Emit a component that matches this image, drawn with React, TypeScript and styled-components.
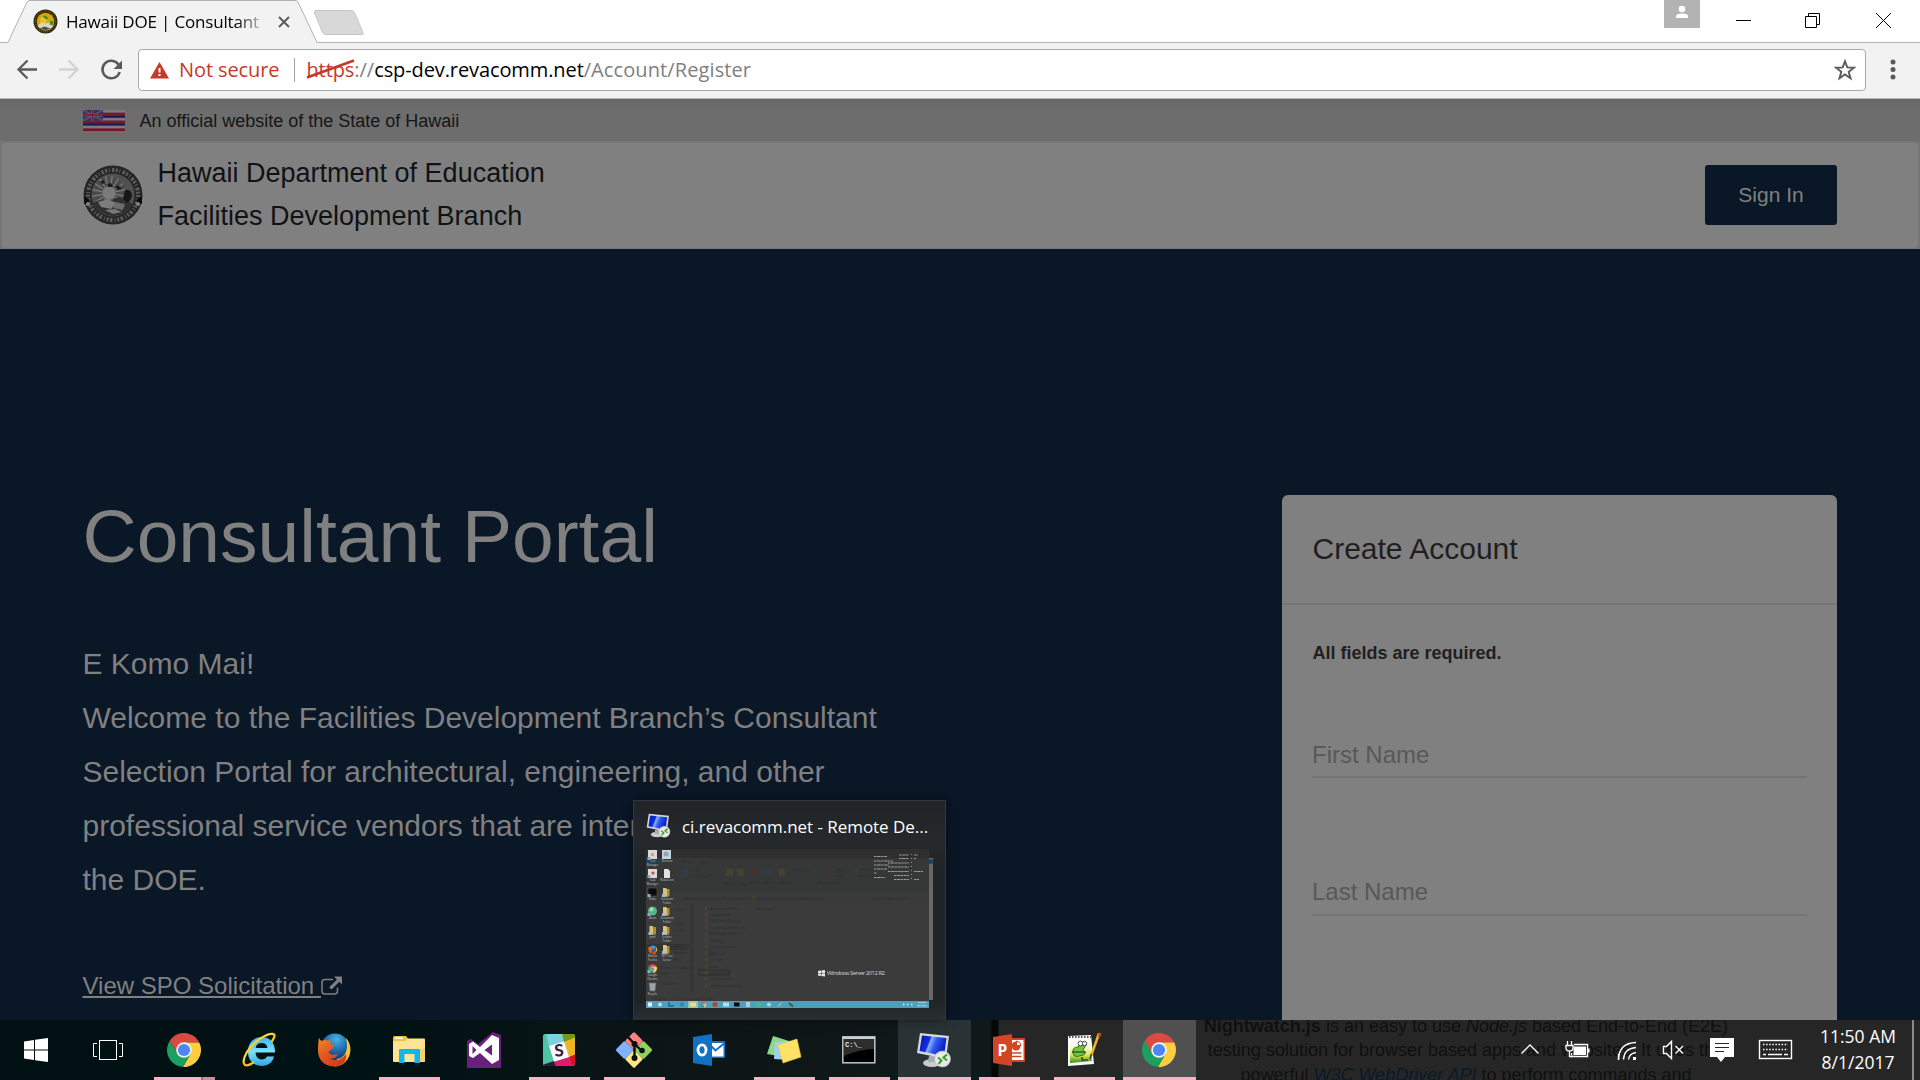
import React from "react";
import styled, { createGlobalStyle, css } from "styled-components";

const segoe = `"Open Sans", "Noto Sans", sans-serif`;
const arial = `"Liberation Sans", Arial, sans-serif`;

const GlobalStyle = createGlobalStyle`
  * { box-sizing: border-box; }
  body { margin: 0; background: #000; overflow: hidden; }
  svg { display: block; flex: none; }
`;

const Desktop = styled.div`
  position: relative;
  width: 1920px;
  height: 1080px;
  display: flex;
  flex-direction: column;
  overflow: hidden;
  font-family: ${arial};
`;

/* ---------- browser chrome ---------- */

const TitleBar = styled.div`
  display: flex;
  align-items: flex-start;
  height: 43px;
  background: linear-gradient(#fff 42px, #b4b4b4 42px);
`;

const Tab = styled.div`
  position: relative;
  display: flex;
  align-items: center;
  width: 312px;
  height: 43px;
  margin-left: 7px;
  padding: 0 0 0 26px;
`;

const TabShape = styled.svg`
  position: absolute;
  left: 0;
  top: 0;
`;

const TabTitle = styled.div`
  position: relative;
  width: 194px;
  margin-left: 8px;
  font: 17px/40px ${segoe};
  letter-spacing: -0.18px;
  color: #000;
  white-space: nowrap;
  overflow: hidden;
  mask-image: linear-gradient(90deg, #000 170px, rgba(0, 0, 0, 0.25) 194px);
`;

const TabIcon = styled.svg`
  position: relative;
`;

const TabClose = styled.svg`
  position: relative;
  margin-left: 18px;
`;

const NewTab = styled.svg`
  margin: 9px 0 0 -6px;
`;

const WindowControls = styled.div`
  display: flex;
  margin-left: auto;
  height: 42px;
`;

const Toolbar = styled.div`
  display: flex;
  align-items: center;
  height: 56px;
  padding-bottom: 1px;
  background: #f2f2f2;
  border-bottom: 1px solid #b5b7b5;
`;

const NavIcons = styled.div`
  display: flex;
  align-items: center;
  width: 138px;
`;

const Omnibox = styled.div`
  display: flex;
  align-items: center;
  width: 1728px;
  height: 42px;
  padding: 0 9px 0 11px;
  background: #fff;
  border: 1px solid #a9a9a9;
  border-radius: 4px;
  font: 20px/42px ${segoe};
  white-space: nowrap;
`;

const NotSecure = styled.span`
  margin-left: 10px;
  letter-spacing: -0.1px;
  color: #c53929;
`;

const UrlDivider = styled.span`
  width: 1px;
  height: 24px;
  margin: 0 11px 0 15px;
  background: #a0a0a0;
`;

const Scheme = styled.span`
  position: relative;
  letter-spacing: -0.1px;
  color: #c53929;
`;

const Strike = styled.svg`
  position: absolute;
  left: 0;
  top: 8px;
`;

const UrlPart = styled.span<{ $color: string; $spacing: string }>`
  color: ${(p) => p.$color};
  letter-spacing: ${(p) => p.$spacing};
`;

const Push = styled.span`
  margin-left: auto;
`;

/* ---------- web page ---------- */

const GovBanner = styled.div`
  display: flex;
  align-items: center;
  height: 42px;
  padding-left: 83px;
  background: linear-gradient(#686868, #6d6d6d 14px, #6d6d6d);
  font-size: 18px;
  line-height: 42px;
  color: #161616;
`;

const BannerText = styled.span`
  margin: 1px 0 0 14.5px;
`;

const SiteHeaderWrap = styled.div`
  background: #747474;
  height: 108px;
`;

const SiteHeader = styled.header`
  display: flex;
  align-items: center;
  height: 108px;
  padding: 0 81px 1px;
  background: #808080;
  border: 2px solid #757575;
  border-bottom-width: 1px;
  border-radius: 5px;
`;

const SiteName = styled.div`
  margin: 0 0 0 14.5px;
  font-size: 27px;
  line-height: 43px;
  color: #101214;
`;

const SignIn = styled.button`
  width: 132px;
  height: 60px;
  margin-left: auto;
  border: 0;
  border-radius: 3px;
  background: #0a1727;
  color: #808080;
  font: 21px/60px ${arial};
  padding: 0;
`;

const Hero = styled.main`
  display: flex;
  justify-content: space-between;
  height: 771px;
  padding: 0 83px 0 82.5px;
  overflow: hidden;
  background: #0a1727;
  color: #808080;
`;

const Intro = styled.section`
  padding-top: 242px;
`;

const HeroTitle = styled.h1`
  margin: 0;
  font-weight: 400;
  font-size: 75px;
  line-height: 90px;
`;

const HeroText = styled.p`
  margin: 56px 0 0;
  font-size: 30px;
  line-height: 54px;
  white-space: nowrap;
`;

const SolicitationLink = styled.a`
  display: flex;
  align-items: center;
  margin-top: 61px;
  font-size: 24px;
  line-height: 36px;
`;

const LinkLabel = styled.span`
  white-space: pre;
  text-decoration: underline;
  text-decoration-thickness: 2px;
  text-underline-offset: 2px;
  text-decoration-skip-ink: none;
`;

const Card = styled.section`
  width: 555px;
  height: 600px;
  margin-top: 246px;
  background: #808080;
  border-radius: 6px 6px 0 0;
`;

const CardHead = styled.h2`
  height: 110px;
  margin: 0;
  padding-left: 30.5px;
  border-bottom: 2px solid #747474;
  font-weight: 400;
  font-size: 30px;
  line-height: 107px;
  color: #1f1f1f;
`;

const CardBody = styled.div`
  padding: 34px 30px 0;
`;

const RequiredNote = styled.strong`
  display: block;
  padding-left: 0.5px;
  font-size: 18px;
  line-height: 28px;
  color: #1f1f1f;
`;

const Field = styled.div<{ $gap: number; $height: number }>`
  height: ${(p) => p.$height}px;
  margin-top: ${(p) => p.$gap}px;
  border-bottom: 2px solid #747474;
  font-size: 24px;
  line-height: 36px;
  color: #585858;
`;

/* ---------- window preview ---------- */

const Preview = styled.aside`
  position: absolute;
  left: 633px;
  top: 800px;
  width: 313px;
  height: 220px;
  padding: 0 12px;
  border: 1px solid #2f3740;
  border-bottom: 0;
  background: linear-gradient(#212427, #26292b 40px, #212427 70px, #212427 200px, #2a2e30);
  box-shadow: 0 0 12px rgba(0, 0, 0, 0.45);
`;

const PreviewTitle = styled.div`
  display: flex;
  align-items: center;
  height: 48px;
  font: 17px/50px ${segoe};
  letter-spacing: -0.04px;
  color: #fff;
  white-space: nowrap;
`;

const PreviewName = styled.span`
  margin: 4px 0 0 11px;
`;

/* ---------- taskbar ---------- */

const TaskbarRoot = styled.footer`
  position: relative;
  display: flex;
  height: 60px;
  overflow: hidden;
  background: linear-gradient(90deg, #001013 0, #011214 400px, #0b1416 640px, #101819 900px, #101819 991px, #050606 992px, #050606 998px, #262626 999px);
`;

const PinnedButton = styled.div`
  display: flex;
  align-items: center;
  justify-content: center;
  width: 72px;
  height: 60px;
`;

const Apps = styled.div`
  display: flex;
  gap: 2px;
  margin-left: 4px;
`;

const AppButton = styled.div<{ $state: "idle" | "open" | "stacked" | "active" | "current" }>`
  display: flex;
  align-items: center;
  justify-content: center;
  width: 73px;
  height: 60px;
  padding-right: 2px;
  ${(p) => p.$state === "active" && css`background: #293335; border-bottom: 3px solid #ffb0c8; padding-top: 3px;`}
  ${(p) => p.$state === "current" && css`background: #505050; border-bottom: 3px solid #ffb0c8; padding-top: 3px;`}
  ${(p) => p.$state === "open" && css`background: linear-gradient(#ffb0c8, #ffb0c8) 6px 57px / 61px 3px no-repeat;`}
  ${(p) => p.$state === "stacked" && css`
    background:
      linear-gradient(#ffb0c8, #ffb0c8) 6px 57px / 47px 3px no-repeat,
      linear-gradient(#a06c7c, #a06c7c) 53px 57px / 2px 3px no-repeat,
      linear-gradient(#cc8da0, #cc8da0) 55px 57px / 12px 3px no-repeat;
  `}
`;

const BehindText = styled.p`
  position: absolute;
  left: 1196px;
  top: -6.5px;
  width: 540px;
  margin: 0;
  text-align: center;
  font: 18px/24.6px ${arial};
  color: #101010;
  white-space: nowrap;
`;

const ApiLink = styled.em`
  color: #0a1a28;
`;

const Tray = styled.div`
  position: relative;
  display: flex;
  align-items: center;
  margin-left: auto;
  padding-right: 6px;
`;

const TrayIcons = styled.div`
  display: flex;
  align-items: center;
`;

const Clock = styled.div`
  width: 80px;
  margin: 0 14px 0 25px;
  padding-bottom: 2px;
  text-align: center;
  font: 17.5px/26px ${segoe};
  color: #fff;
  white-space: nowrap;
`;

const ShowDesktop = styled.div`
  width: 2px;
  height: 60px;
  background: #8a8a8a;
`;

/* ---------- drawings ---------- */

const ChromeLogo = ({ size = 34 }: { size?: number }) => (
  <svg width={size} height={size} viewBox="-17 -17 34 34">
    <path d="M-14.18-9.36A17 17 0 0 1 15.2-7.6H0L-6.58 3.8Z" fill="#db4a3e" />
    <path d="M15.2-7.6A17 17 0 0 1-1.02 16.96L6.58 3.8 0-7.6Z" fill="#ffcd40" />
    <path d="M-1.02 16.96A17 17 0 0 1-14.18-9.36L-6.58 3.8 6.58 3.8Z" fill="#1aa05f" />
    <circle r="7.8" fill="#f1f1f1" />
    <circle r="6.1" fill="#4a87f3" />
  </svg>
);

const IeLogo = () => (
  <svg width="36" height="36" viewBox="0 0 36 36">
    <defs>
      <linearGradient id="ie" x2="0" y2="1">
        <stop offset="0" stopColor="#3bb4ec" />
        <stop offset=".5" stopColor="#7fe0fc" />
        <stop offset="1" stopColor="#2ca7e3" />
      </linearGradient>
    </defs>
    <path d="M34 20.500H14.500C15 25 17.300 27.500 21 27.500 23.500 27.500 25 26.500 26 24.500H33C31.500 30.500 27 34 20.800 34 12.600 34 7 28.200 7 19.700 7 11 12.600 5 20.700 5 29 5 34.300 11 34 20.500ZM14.600 16H26.500C26 12.800 24 11 20.700 11 17.400 11 15.200 12.800 14.600 16Z" fill="url(#ie)" />
    <path d="M30.500 10C34 5 34.500 2.500 32 2 26 .8 12 10 6 20 2.500 26 1.500 31.500 4 33 6 34 9.500 32.500 13 30" fill="none" stroke="#f5c518" strokeWidth="2.300" />
    <path d="M32 2C26 .8 12 10 6 20 4 23.500 2.800 27 2.700 29.500" fill="none" stroke="#ffe35a" strokeWidth="1" />
  </svg>
);

const FirefoxLogo = ({ size = 36 }: { size?: number }) => (
  <svg width={size} height={size} viewBox="0 0 36 36">
    <defs>
      <radialGradient id="ffGlobe" cx=".55" cy=".2" r=".8">
        <stop offset="0" stopColor="#45b4e8" />
        <stop offset=".6" stopColor="#1b5aa0" />
        <stop offset="1" stopColor="#0e2c63" />
      </radialGradient>
      <linearGradient id="ffFox" x1="0" y1="0" x2=".7" y2="1">
        <stop offset="0" stopColor="#f08a24" />
        <stop offset=".6" stopColor="#e2501f" />
        <stop offset="1" stopColor="#c93c1a" />
      </linearGradient>
    </defs>
    <circle cx="19" cy="16" r="14.500" fill="url(#ffGlobe)" />
    <path d="M30 6C35 11 36 20 32 26.500 29 31.500 24 34.500 18 34.500L21 27C28 26 31 20 31 14 31 11 30.500 8 30 6Z" fill="#fbc42e" />
    <path d="M3 5.500C3.500 7.500 4.500 8.500 6 9 8 7.500 10.500 7.800 12.500 9 13.500 7.800 14.500 7.300 16 7.500 14 9.500 13.500 11 14.500 12.500 16 12.500 18 12.500 18.500 14 17.500 16 15.500 16.500 14.500 18.500 12.500 19.500 12 20 13.500 21.500 16 23.500 19 22.500 22 22 20 26.500 16.500 27 14 26.500 18 29.500 26 28.500 30 21.500 31.500 29 26.500 34.500 18.500 34.500 8.500 34.500 2 28 2 18.500 2 13 2.500 8.500 3 5.500Z" fill="url(#ffFox)" />
  </svg>
);

const ExplorerIcon = () => (
  <svg width="34" height="30" viewBox="0 0 34 30">
    <path d="M1 2.500Q1 1 2.500 1H14L16 3.500H1Z" fill="#f0c243" />
    <rect x="1" y="3.500" width="32" height="23.500" rx="1" fill="#ffe493" />
    <path d="M1 3V6H13L16 3Z" fill="#f2bf3c" />
    <rect x="3" y="2.500" width="8" height="1.500" fill="#fff" />
    <path d="M7 15Q7 14 8 14H27Q28 14 28 15V28H22.500V19H12.500V28H7Z" fill="#13b5ee" />
    <path d="M28 15 33 12V26.500H28Z" fill="#f4cf6e" />
  </svg>
);

const VisualStudioIcon = () => (
  <svg width="36" height="38" viewBox="0 0 36 38">
    <path d="M1 10 5 8 12 13 27 1 35 4V37H1Z" fill="#68217a" />
    <path fillRule="evenodd" d="M3 13 7 10.500 14 16 26 4 33 7V29L26 33 14 22 7 27 3 25ZM6.500 15V23L10.500 19ZM18.500 19 26 24.500V13.500Z" fill="#fff" />
  </svg>
);

const SlackIcon = () => (
  <svg width="34" height="34" viewBox="0 0 34 34">
    <defs><clipPath id="slackClip"><rect x="1" y="1" width="32" height="32" rx="2" /></clipPath></defs>
    <g clipPath="url(#slackClip)">
      <rect width="34" height="34" fill="#4bc5a3" />
      <path d="M4 0H20L22 9 7 13Z" fill="#7fd0e0" />
      <path d="M20 0H34V5L22 9Z" fill="#71991c" />
      <path d="M22 9 34 4V22L27 24Z" fill="#edb625" />
      <path d="M27 24 34 21V34H30Z" fill="#d6131c" />
      <path d="M12 29 27 24 30 34H14Z" fill="#e8176b" />
      <path d="M0 32 12 28 14 34H0Z" fill="#3d1240" />
      <path d="M7 13 22 8.500 27 24 12 28.500Z" fill="#fff" />
    </g>
    <text x="17" y="23.500" textAnchor="middle" fontFamily="Lato" fontWeight="900" fontSize="17" fill="#3f1d45" transform="rotate(-4 17 18)">S</text>
  </svg>
);

const GitIcon = () => (
  <svg width="38" height="38" viewBox="0 0 38 38">
    <rect x="-6.500" y="-6.500" width="13" height="13" rx="1.500" transform="translate(19 10) rotate(45)" fill="#ff8080" />
    <rect x="-6.500" y="-6.500" width="13" height="13" rx="1.500" transform="translate(9.500 19) rotate(45)" fill="#80b3ff" />
    <rect x="-6.500" y="-6.500" width="13" height="13" rx="1.500" transform="translate(28.500 19) rotate(45)" fill="#8dd35f" />
    <rect x="-6.500" y="-6.500" width="13" height="13" rx="1.500" transform="translate(19 28) rotate(45)" fill="#ffe680" />
    <path d="M12 5 19.500 13V27M19.500 13 28 21" stroke="#0b1011" strokeWidth="2.400" fill="none" />
    <circle cx="19.500" cy="13" r="3" fill="#0b1011" />
    <circle cx="19.500" cy="27" r="3" fill="#0b1011" />
    <circle cx="27" cy="19.500" r="2.800" fill="#0b1011" />
  </svg>
);

const OutlookIcon = () => (
  <svg width="34" height="34" viewBox="0 0 34 34">
    <rect x="17" y="8" width="16" height="17" rx="1" fill="#1072c4" />
    <rect x="18" y="10" width="13.500" height="13.500" fill="#fff" />
    <path d="M18 12 23.500 17.500 32 10.500" fill="none" stroke="#1072c4" strokeWidth="2" />
    <path d="M1 4 20 1V33L1 30Z" fill="#1072c4" />
    <ellipse cx="10" cy="17" rx="4" ry="5.200" fill="none" stroke="#fff" strokeWidth="2.800" />
  </svg>
);

const StickyIcon = () => (
  <svg width="36" height="34" viewBox="0 0 36 34">
    <path d="M7 3 23 8 18 24 1 21Z" fill="#8fd68a" />
    <path d="M9 9 25 8 24 27 8 26Z" fill="#9fd0f3" />
    <path d="M12 12 31 6 35 24 17 30Z" fill="#ffe168" stroke="#f0c93c" strokeWidth=".6" />
  </svg>
);

const CmdIcon = () => (
  <svg width="34" height="28" viewBox="0 0 34 28">
    <rect x=".8" y=".8" width="32" height="26" fill="#000" stroke="#b5bbc0" strokeWidth="1.600" />
    <path d="M1 1H33V3H1Z" fill="#c9ced2" />
    <path d="M2 3H32V13Q18 13 2 20Z" fill="#2d2d2d" />
    <text x="3" y="10.500" fontFamily="Liberation Mono" fontWeight="700" fontSize="7" fill="#e6e6e6">C:\_</text>
  </svg>
);

const RdpIcon = ({ size = 36 }: { size?: number }) => (
  <svg width={size} height={size} viewBox="0 0 36 36">
    <defs>
      <linearGradient id="rdp" x1="0" y1="0" x2="1" y2=".3">
        <stop offset="0" stopColor="#0511a5" />
        <stop offset=".4" stopColor="#1230e8" />
        <stop offset=".45" stopColor="#8fb2ff" />
        <stop offset=".65" stopColor="#2e57f0" />
        <stop offset="1" stopColor="#0a1fc0" />
      </linearGradient>
    </defs>
    <ellipse cx="16" cy="31" rx="9" ry="4" fill="#c9cccd" />
    <path d="M13 24H21L22 30H12Z" fill="#a9adb0" />
    <path d="M4 1 33 4 30 27 1 21Z" fill="#d5d9dc" />
    <path d="M6 3.500 30.500 6 28 24 3.500 19Z" fill="url(#rdp)" />
    <circle cx="26.500" cy="27" r="8" fill="#e8e8e8" stroke="#b9b9b9" strokeWidth=".7" />
    <path d="M22 25.500 25.500 28.500 22.500 32M31 22.500 27.500 25.500 31 28.500" fill="none" stroke="#37a22b" strokeWidth="2" />
  </svg>
);

const PowerPointIcon = () => (
  <svg width="34" height="34" viewBox="0 0 34 34">
    <rect x="17" y="5" width="16" height="24" rx="1" fill="#d24625" />
    <rect x="18" y="7" width="13.500" height="20" fill="#fff" />
    <circle cx="24" cy="13" r="4.500" fill="#d24625" />
    <path d="M24.500 12.500V8A5 5 0 0 1 29 12.500Z" fill="#fff" stroke="#d24625" />
    <path d="M20 20H29.500M20 23.500H29.500" stroke="#d24625" strokeWidth="1.600" />
    <path d="M1 4 20 1V33L1 30Z" fill="#d24625" />
    <text x="10.300" y="22.500" textAnchor="middle" fontFamily="Open Sans" fontWeight="700" fontSize="15.500" fill="#fff">P</text>
  </svg>
);

const NotepadIcon = () => (
  <svg width="36" height="36" viewBox="0 0 36 36">
    <defs><linearGradient id="npp" x2="0" y2="1"><stop offset="0" stopColor="#fff" /><stop offset=".35" stopColor="#f4f6d0" /><stop offset=".65" stopColor="#dfe84e" /><stop offset="1" stopColor="#2f8f1e" /></linearGradient></defs>
    <path d="M2 4 25 3 28 32 2 34Z" fill="#fbfbfb" />
    <path d="M4 9 25 8 26 29 4 31Z" fill="url(#npp)" />
    <path d="M3 5H25" stroke="#555" strokeWidth="2" strokeDasharray="1.500 1.500" />
    <path d="M7 21Q6 15 12 15L15 11Q19 9 20 13L17 18Q21 22 17 23L11 24.500Q7 24.500 7 21Z" fill="#6cc83e" stroke="#1b5c10" strokeWidth=".8" />
    <circle cx="14.500" cy="11.500" r="2.400" fill="#fff" stroke="#222" strokeWidth=".8" />
    <circle cx="18.500" cy="11.500" r="2.200" fill="#fff" stroke="#222" strokeWidth=".8" />
    <path d="M6 20H20M16 25V28H22" stroke="#222" strokeWidth="1.200" fill="none" />
    <path d="M33 1.500 25 24" stroke="#f0b428" strokeWidth="2.500" />
    <path d="M34.500 1 33 5" stroke="#b5442c" strokeWidth="2.500" />
    <path d="M25.500 22 24 27" stroke="#333" strokeWidth="1.500" />
  </svg>
);

const WindowsLogo = () => (
  <svg width="24" height="24" viewBox="0 0 24 24" fill="#fff">
    <path d="M0 3.400 10 2V11.500H0ZM11 1.800 24 0V11.500H11ZM0 12.500H10V22L0 20.600ZM11 12.500H24V24L11 22.200Z" />
  </svg>
);

const TaskViewIcon = () => (
  <svg width="30" height="20" viewBox="0 0 30 20" fill="none" stroke="#fff">
    <rect x="6.500" y=".5" width="17" height="19" />
    <path d="M4 3.500H.5V16.500H4M26 3.500H29.500V16.500H26" />
  </svg>
);

const HawaiiFlag = () => (
  <svg width="42" height="21" viewBox="0 0 42 21">
    <rect width="42" height="21" fill="#7c7c80" />
    {["#7c7a80", "#77182b", "#16204f", "#7c7a80", "#77182b", "#16204f", "#7c7a80", "#77142a"].map((c, i) => (
      <rect key={i} y={i * 2.625} width="42" height="2.700" fill={c} />
    ))}
    <rect width="20" height="10.800" fill="#2d3163" />
    <path d="M0 0 20 10.800M20 0 0 10.800" stroke="#6a6684" strokeWidth="1.800" />
    <path d="M0 0 20 10.800M20 0 0 10.800" stroke="#7b2a40" strokeWidth=".9" />
    <path d="M9.500 0V10.800M0 5.200H20" stroke="#6d6684" strokeWidth="2.600" />
    <path d="M9.500 0V10.800M0 5.200H20" stroke="#7b1f36" strokeWidth="1.700" />
  </svg>
);

const StateSeal = () => (
  <svg width="60" height="60" viewBox="-30 -30 60 60">
    <circle r="29.500" fill="#252525" />
    <circle r="25" fill="none" stroke="#5c5c5c" strokeWidth="4" strokeDasharray="2 1.700 1 2.200 2.600 1.400" />
    <circle r="21.500" fill="#505050" />
    {Array.from({ length: 32 }, (_, i) => (
      <path key={i} d="M-4-2V-19" stroke={i % 2 ? "#787878" : "#474747"} strokeWidth="1.300" transform={`rotate(${i * 11.25} -4 -2)`} />
    ))}
    <circle cx="-4" cy="-2" r="6.500" fill="#7b7b7b" />
    <path d="M-20 8Q-12 3-4 6L6 2 14 6 20 9Q14 20 0 21-14 20-20 8Z" fill="#303030" />
    <path d="M-15 7-5 4 3 8-2 14-12 12Z" fill="#7d7d7d" />
    <path d="M2 7 12 9 10 15 0 13Z" fill="#6c6c6c" />
    <path d="M-8 15 2 14 9 17 0 19Z" fill="#777" />
    <path d="M12-5Q18-6 19 0 18 6 14 8L10 4Z" fill="#161616" />
    <path d="M-13-13-10-15-8-12-11-11ZM-6-11-2-12 0-8-5-8ZM2-8 5-10 9-6 5-5Z" fill="#1d1d1d" />
    <path d="M-29 2V9L-24 8V4ZM29 2V9L24 8V4Z" fill="#080808" />
    <circle cx="-25" cy="9" r="2" fill="#858585" />
    <circle cx="25" cy="9" r="2" fill="#858585" />
  </svg>
);

const Favicon = () => (
  <TabIcon width="25" height="25" viewBox="-12.500 -12.500 25 25">
    <circle r="12" fill="#2c2507" />
    <circle r="10.300" fill="none" stroke="#6b5a12" strokeWidth="1.400" strokeDasharray="1.200 1" />
    <circle r="8.800" fill="#d6a413" />
    <circle cx="-2" cy="-1" r="3.500" fill="#efbd2d" />
    <path d="M-8 4-4 1 0 2 5 1 8 4Q5 9 0 9-5 9-8 4Z" fill="#d9d6c4" />
    <path d="M-6 7-1 5 5 7 0 9Z" fill="#58543e" />
    <path d="M5-1 8 0 7 4 4 3ZM-3-5 0-6 3-3 1-2Z" fill="#3d8e2a" />
  </TabIcon>
);

const fileNames = ["AttachmentFiles", "commands", "CSP-Test-Reports", "customCommands", "FindingTableView", "Nightly", "node_modules", "REports", "screen", "tests", "nightwatch", "nightwatch", "selenium-debug"];
const ribbonLabels: [number, number, string][] = [[78, 36, "Move"], [91, 36, "Copy"], [104, 35, "Delete"], [118, 35, "Name"], [134, 35, "New"], [172, 35, "Properties"], [146, 22, "New item"], [190, 22, "Open"], [190, 28, "Edit"], [212, 22, "Select all"], [212, 28, "Select none"], [48, 22, "Cut"], [48, 28, "Copy path"]];

const FolderGlyph = ({ x, y }: { x: number; y: number }) => (
  <g transform={`translate(${x} ${y})`}>
    <path d="M0 0H3L4 1V9L0 8Z" fill="#d9c276" />
    <path d="M4 1H6.500V8L4 9Z" fill="#a78d43" />
    <rect x="-1" y="6" width="3" height="3" fill="#9fb9d6" />
  </g>
);

const DesktopThumb = () => (
  <svg width="288" height="160" viewBox="0 0 288 160" fontFamily="Open Sans">
    <rect width="283" height="152" fill="#2e2f2e" />
    <rect x="283" y="9" width="4" height="142" fill="#686868" />
    <rect y="9" width="283" height="143" fill="#3b3b3c" />
    <rect y="9" width="283" height="34" fill="#363737" />
    <rect y="43" width="283" height="12" fill="#393a39" />
    <rect x="44" y="55" width="4" height="88" fill="#353636" />
    <rect y="95" width="43" height="6" fill="#333434" />
    <rect x="0" y="10" width="15" height="5" fill="#243d52" />
    <g fontSize="4" fill="#2a2b2b">
      <text x="37" y="14">Share</text><text x="54" y="14">View</text>
      {ribbonLabels.map(([x, y, t], i) => <text key={i} x={x} y={y}>{t}</text>)}
      <text x="36" y="50.500">▸ AutomationTest ▸ CSP-Consultant-Portal ▸ ConsultantPortal ▸ Nightwatch ▸</text>
      <text x="226" y="50.500">Search Nightwatch</text>
      <text x="28" y="62">access</text><text x="28" y="76">loads</text><text x="28" y="83">ments</text>
      <text x="28" y="98">Disk</text><text x="28" y="105">Memos</text><text x="28" y="112">Files</text>
      <text x="15" y="119.500">SharePointApps</text><text x="15" y="126">Hello</text><text x="15" y="136">OneDrive</text>
      <text x="5" y="150.500">13 items</text><text x="25" y="150.500">1 item selected 91 bytes</text>
      <text x="110" y="60.500">Redis.json</text>
      {fileNames.map((t, i) => <text key={i} x="64" y={60.5 + i * 6.45}>{t}</text>)}
    </g>
    <rect x="53" y="121" width="30" height="5" fill="none" stroke="#2d2e2d" />
    {fileNames.map((_, i) => <rect key={i} x="59" y={57 + i * 6.45} width="2.500" height="4" fill="#48442f" />)}
    <g fill="#45412f"><rect x="80" y="20" width="7" height="7" /><rect x="91" y="20" width="7" height="7" /><rect x="133" y="20" width="6" height="7" /><rect x="106" y="47" width="3" height="3" /></g>
    <g fill="#303d46"><rect x="36" y="20" width="6" height="8" /><rect x="118" y="21" width="7" height="4" /><rect x="208" y="19" width="5" height="4" /></g>
    <path d="M105 20 112 27M112 20 105 27" stroke="#542c2c" strokeWidth="1.500" />
    <path d="M177 23 179 26 184 19" stroke="#4a2e2e" fill="none" strokeWidth="1.300" />
    <circle cx="284.500" cy="12.500" r="2.500" fill="#1c3f63" />
    <g stroke="#a5a5a5" strokeWidth=".9">
      <path d="M228 7.500H241M228 12H247M228 16H243M228 20H241M228 24H231M228 28.500H239" strokeDasharray="2 .6 4 .5" />
      <path d="M253 6H263M253 9.500H263M242 14H263M242 18H263M242 22.500H263M248 26.500H263M248 30.500H263M268 6H272M268 9.500H270M268 22.500H277M268 30.500H273" strokeDasharray="2.500 .6 3 .5" />
      <path d="M265.500 5V31" strokeDasharray="1 3" />
    </g>
    <g>
      <rect x="2" y="1" width="9" height="9" fill="#d6d8da" /><rect x="5" y="4" width="3" height="3" fill="#e0a43c" />
      <rect x="16" y="1" width="9" height="9" fill="#c7d3da" /><circle cx="20" cy="5" r="2.500" fill="#7faac4" />
      <rect x="2" y="20" width="9" height="9" fill="#d9dada" /><circle cx="7" cy="24" r="1.500" fill="#cf4444" />
      <path d="M18 20H22L24 22V29H18Z" fill="#e2e2e2" />
      <rect x="2" y="39" width="9" height="8" fill="#0b0b0b" stroke="#5d5d5d" strokeWidth=".6" />
      <circle cx="6.500" cy="62" r="4.500" fill="#55b684" /><circle cx="5.500" cy="60.500" r="2" fill="#9bdcb4" />
      <g transform="translate(2 96) scale(.26)"><FirefoxLogo /></g>
      <g transform="translate(2 115)"><ChromeLogo size={9} /></g>
      <path d="M3 134H10L9 142H4Z" fill="#9aa3aa" stroke="#5c6d7d" strokeWidth=".7" />
      <FolderGlyph x={3.5} y={77} /><FolderGlyph x={17} y={39} /><FolderGlyph x={17} y={58} /><FolderGlyph x={17} y={77} /><FolderGlyph x={17} y={96} />
      {[4, 22, 41, 60, 117].map((y) => <rect key={y} x="1.500" y={y + 4} width="3" height="3" fill="#8fa9c9" />)}
    </g>
    <g fontSize="2.800" fill="#c4c4c4" textAnchor="middle">
      {["Test", "Task", "Redis", "Atom", "ptml", "Mozilla", "Google", "Recycle"].map((t, i) => <text key={i} x="6.500" y={[13, 32, 50.500, 70, 89, 107.500, 126.500, 145.500][i]}>{t}</text>)}
      {["Shortcut", "Robots.txt", "Selenium", "Document", "Jenkins", "SPF Test"].map((t, i) => <text key={i} x="21" y={[13, 32, 50.500, 69.500, 88.500, 107.500][i]}>{t}</text>)}
      {["Manager", "Manager"].map((t, i) => <text key={i} x="6.500" y={[17, 36][i]}>{t}</text>)}
      {["Firefox", "Chrome"].map((t, i) => <text key={i} x="6.500" y={[111.500, 130.500][i]}>{t}</text>)}
      {["Folder", "Folder", "Folder", "Server"].map((t, i) => <text key={i} x="21" y={[54.500, 73.500, 92.500, 111.500][i]}>{t}</text>)}
    </g>
    <path d="M172 122 175 121.500V124H172ZM175.500 121.500 179 121V124H175.500ZM172 124.500H175V127L172 126.500ZM175.500 124.500H179V127.500L175.500 127Z" fill="#e9e9e9" />
    <text x="181" y="126" fontSize="6" textLength="58" fill="#d2d2d2">Windows Server 2012 R2</text>
    <rect y="152" width="283" height="7" fill="#4f9ebc" />
    <rect x="42" y="152" width="10" height="7" fill="#93c4bb" />
    <path d="M2 153.500H6V157.500H2Z" fill="#e6f3f8" />
    <circle cx="14" cy="155.500" r="2" fill="#c8dbe2" />
    <path d="M23 153V157H28" stroke="#1c66a8" strokeWidth="1.500" fill="none" />
    <circle cx="36" cy="155.500" r="2" fill="#3480b6" />
    <rect x="44" y="153.500" width="6" height="4" fill="#f3dc83" />
    <g transform="translate(55 153)"><ChromeLogo size={5.5} /></g>
    <circle cx="69" cy="155.500" r="2.500" fill="#a34a2f" />
    <rect x="77" y="153.500" width="6" height="4" fill="#b7dcea" />
    <rect x="88" y="153.500" width="5.500" height="4" fill="#0a0a0a" />
    <rect x="100" y="153" width="4" height="5" fill="#b9c8d4" />
    <circle cx="112.500" cy="155.500" r="2.500" fill="#4fb58b" />
    <circle cx="123" cy="155.500" r="2" fill="#a9d4e6" />
    <path d="M132 157.500 136 153.500" stroke="#e8d552" />
    <path d="M143 154 147 157.500" stroke="#3c5b3c" strokeWidth="2" />
    <g fill="#c9dde6"><rect x="257" y="154.500" width="1.500" height="2" /><rect x="261" y="154.500" width="1.500" height="2" /><rect x="265" y="154.500" width="1.500" height="2" /><rect x="272" y="153" width="8" height="1.300" opacity=".6" /><rect x="271" y="156" width="10" height="1.300" opacity=".6" /></g>
  </svg>
);

/* ---------- sections ---------- */

const Browser = () => (
  <>
    <TitleBar>
      <Tab>
        <TabShape width="312" height="43" viewBox="0 0 312 43">
          <path d="M0 42.500H1L20 2Q21 .5 23 .5H288Q290 .5 291 2L310 42.500H312V43H0Z" fill="#f2f2f2" />
          <path d="M0 42.500H1L20 2Q21 .5 23 .5H288Q290 .5 291 2L310 42.500H312" fill="none" stroke="#b0b0b0" />
        </TabShape>
        <Favicon />
        <TabTitle>Hawaii DOE | Consultant</TabTitle>
        <TabClose width="12" height="12" viewBox="0 0 12 12"><path d="M1 1 11 11M11 1 1 11" stroke="#5a5a5a" strokeWidth="1.900" /></TabClose>
      </Tab>
      <NewTab width="52" height="27" viewBox="0 0 52 27"><path d="M3 1.500H38Q40.500 1.500 41.500 3.500L50 23.500Q51 25.500 48.500 25.500H13Q10.500 25.500 9.500 23.500L1.500 4Q1 1.500 3 1.500Z" fill="#d8d8d8" stroke="#c6c6c6" /></NewTab>
      <WindowControls>
        <svg width="256" height="42" viewBox="1664 0 256 42">
          <rect x="1664" width="36" height="28" fill="#b3b3b3" />
          <circle cx="1682" cy="9" r="3.300" fill="#fff" />
          <path d="M1676 18V16Q1676 13.500 1682 13.500 1688 13.500 1688 16V18Z" fill="#fff" />
          <path d="M1736 20.500H1751M1805.500 16.500H1816.500V27.500H1805.500ZM1808.500 16.500V13.500H1819.500V24.500H1816.500M1876 13 1891 28M1891 13 1876 28" fill="none" stroke="#000" />
        </svg>
      </WindowControls>
    </TitleBar>
    <Toolbar>
      <NavIcons>
        <svg width="138" height="40" viewBox="0 50 138 40" fill="none" strokeWidth="2.300">
          <path d="M37 69.500H19M27.500 60.500 18.500 69.500 27.500 78.500" stroke="#5a5a5a" />
          <path d="M59 69.500H77M68.500 60.500 77.500 69.500 68.500 78.500" stroke="#d3d3d3" />
          <path d="M118.500 64.500A8.800 8.800 0 1 0 119.700 72" stroke="#5a5a5a" strokeWidth="2.500" />
          <path d="M122 60.500V69H113.500Z" fill="#5a5a5a" />
        </svg>
      </NavIcons>
      <Omnibox>
        <svg width="19" height="17" viewBox="0 0 19 17"><path d="M9.500 0 19 16.500H0Z" fill="#c53929" /><path d="M9.500 6V10.500M9.500 12V14" stroke="#fff" strokeWidth="2" /></svg>
        <NotSecure>Not secure</NotSecure>
        <UrlDivider />
        <Scheme>
          https
          <Strike width="50" height="24" viewBox="0 0 50 24"><path d="M1 20.500 48 3.500" stroke="#c53929" strokeWidth="2.600" /></Strike>
        </Scheme>
        <UrlPart $color="#808080" $spacing="0">://</UrlPart>
        <UrlPart $color="#000" $spacing="-0.1px">csp-dev.revacomm.net</UrlPart>
        <UrlPart $color="#808080" $spacing="0.1px">/Account/Register</UrlPart>
        <Push />
        <svg width="22" height="22" viewBox="0 0 22 22"><path d="M11 2.300 13.300 8.400 19.800 8.700 14.700 12.800 16.500 19.200 11 15.500 5.500 19.200 7.300 12.800 2.200 8.700 8.700 8.400Z" fill="none" stroke="#5a5a5a" strokeWidth="1.900" /></svg>
      </Omnibox>
      <svg width="54" height="30" viewBox="0 0 54 30" fill="#5a5a5a"><circle cx="27" cy="7" r="2.500" /><circle cx="27" cy="14.500" r="2.500" /><circle cx="27" cy="22" r="2.500" /></svg>
    </Toolbar>
  </>
);

const WebPage = () => (
  <>
    <GovBanner>
      <HawaiiFlag />
      <BannerText>An official website of the State of Hawaii</BannerText>
    </GovBanner>
    <SiteHeaderWrap>
      <SiteHeader>
        <StateSeal />
        <SiteName>Hawaii Department of Education<br />Facilities Development Branch</SiteName>
        <SignIn>Sign In</SignIn>
      </SiteHeader>
    </SiteHeaderWrap>
    <Hero>
      <Intro>
        <HeroTitle>Consultant Portal</HeroTitle>
        <HeroText>
          E Komo Mai!<br />
          Welcome to the Facilities Development Branch’s Consultant<br />
          Selection Portal for architectural, engineering, and other<br />
          professional service vendors that are interested in working with<br />
          the DOE.
        </HeroText>
        <SolicitationLink>
          <LinkLabel>View SPO Solicitation </LinkLabel>
          <svg width="22" height="20" viewBox="0 0 22 20">
            <path d="M12 3.500H4Q1 3.500 1 6.500V15Q1 18 4 18H13.500Q16.500 18 16.500 15V11.500" fill="none" stroke="#808080" strokeWidth="1.500" />
            <path d="M13 .5H21V8.500L18.300 5.800 10.500 13.500 8.200 11.200 16 3.400Z" fill="#808080" />
          </svg>
        </SolicitationLink>
      </Intro>
      <Card>
        <CardHead>Create Account</CardHead>
        <CardBody>
          <RequiredNote>All fields are required.</RequiredNote>
          <Field $gap={70} $height={41}>First Name</Field>
          <Field $gap={96} $height={42}>Last Name</Field>
        </CardBody>
      </Card>
    </Hero>
  </>
);

type AppState = "idle" | "open" | "stacked" | "active" | "current";
const apps: { icon: React.ReactNode; state: AppState }[] = [
  { icon: <ChromeLogo />, state: "stacked" },
  { icon: <IeLogo />, state: "idle" },
  { icon: <FirefoxLogo />, state: "idle" },
  { icon: <ExplorerIcon />, state: "open" },
  { icon: <VisualStudioIcon />, state: "idle" },
  { icon: <SlackIcon />, state: "open" },
  { icon: <GitIcon />, state: "open" },
  { icon: <OutlookIcon />, state: "idle" },
  { icon: <StickyIcon />, state: "open" },
  { icon: <CmdIcon />, state: "open" },
  { icon: <RdpIcon />, state: "active" },
  { icon: <PowerPointIcon />, state: "open" },
  { icon: <NotepadIcon />, state: "open" },
  { icon: <ChromeLogo />, state: "current" },
];

const Taskbar = () => (
  <TaskbarRoot>
    <PinnedButton><WindowsLogo /></PinnedButton>
    <PinnedButton><TaskViewIcon /></PinnedButton>
    <Apps>
      {apps.map((a, i) => <AppButton key={i} $state={a.state}>{a.icon}</AppButton>)}
    </Apps>
    <BehindText>
      <b>Nightwatch.js</b> is an easy to use <em>Node.js</em> based End-to-End (E2E)<br />
      testing solution for browser based apps and websites. It uses the<br />
      powerful <ApiLink>W3C WebDriver API</ApiLink> to perform commands and
    </BehindText>
    <Tray>
      <TrayIcons>
        <svg width="275" height="60" viewBox="1518 1020 275 60" fill="none" stroke="#fff" strokeWidth="1.400">
          <path d="M1521.500 1053.500 1530 1045 1538.500 1053.500" />
          <path d="M1574 1044.500H1587.500V1056.500H1571.500V1053" />
          <rect x="1573.500" y="1046.500" width="12.500" height="8.500" fill="#fff" stroke="none" />
          <path d="M1588.500 1048.500V1052.500" strokeWidth="2" />
          <path d="M1567.500 1041V1045M1571.500 1041V1045M1566 1045.500H1573V1048Q1573 1051 1569.500 1051 1566 1051 1566 1048ZM1569.500 1051V1056.500H1572" fill="#262626" strokeWidth="1.300" />
          <path d="M1618.500 1059.500Q1619 1043 1636 1042.500M1623.500 1059.500Q1624 1048.500 1636 1047.500M1628.500 1059.500Q1629 1053.500 1636 1052.500" />
          <path d="M1618.500 1054V1060" />
          <rect x="1633" y="1057" width="3" height="3" fill="#fff" stroke="none" />
          <path d="M1663.500 1046.500H1666.500L1671.500 1041.500V1058.500L1666.500 1053.500H1663.500ZM1675.500 1046 1683 1053.500M1683 1046 1675.500 1053.500" />
          <path d="M1710 1038H1734V1057H1725L1721 1062 1717 1057H1710Z" fill="#fff" stroke="none" />
          <path d="M1715 1043.500H1729M1715 1047.500H1729M1715 1051.500H1724" stroke="#262626" strokeWidth="1.200" />
          <rect x="1759.500" y="1040.500" width="32" height="18" />
          <path d="M1763 1044.500H1788M1763 1049.500H1788" strokeDasharray="1.500 1.600" />
          <path d="M1763 1054.500H1766M1768 1054.500H1782M1784 1054.500H1788" />
        </svg>
      </TrayIcons>
      <Clock>11:50 AM<br />8/1/2017</Clock>
      <ShowDesktop />
    </Tray>
  </TaskbarRoot>
);

export default function App() {
  return (
    <>
      <GlobalStyle />
      <Desktop>
        <Browser />
        <WebPage />
        <Taskbar />
        <Preview>
          <PreviewTitle>
            <RdpIcon size={25} />
            <PreviewName>ci.revacomm.net - Remote De...</PreviewName>
          </PreviewTitle>
          <DesktopThumb />
        </Preview>
      </Desktop>
    </>
  );
}
